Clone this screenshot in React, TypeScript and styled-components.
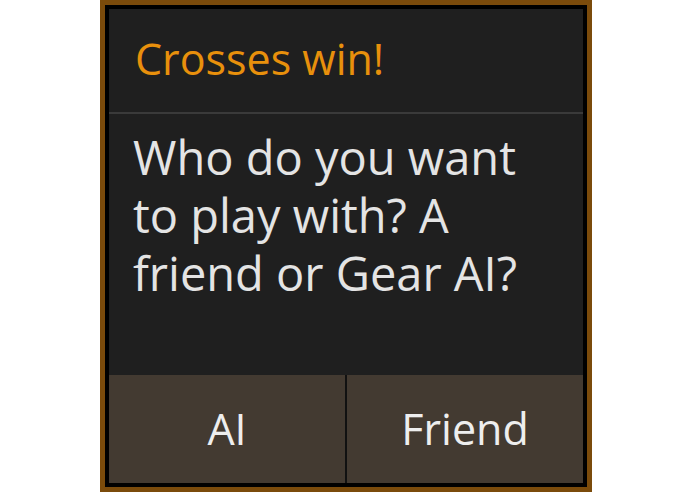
import React from 'react';
import styled, { createGlobalStyle } from 'styled-components';

const GlobalStyle = createGlobalStyle`
  html, body {
    margin: 0;
    padding: 0;
    background: #ffffff;
  }
  body {
    font-family: "Open Sans", "Noto Sans", "DejaVu Sans", sans-serif;
  }
`;

const Page = styled.div`
  width: 695px;
  height: 494px;
  display: flex;
  align-items: flex-start;
  padding-left: 100px;
  box-sizing: border-box;
`;

const Frame = styled.div`
  width: 492px;
  height: 492px;
  box-sizing: border-box;
  border: 5px solid #7b4b0b;
  background: #000000;
  padding: 4px;
`;

const Popup = styled.div`
  width: 474px;
  height: 474px;
  display: flex;
  flex-direction: column;
  background: #1f1f1f;
`;

const Title = styled.div`
  height: 105px;
  box-sizing: border-box;
  padding: 24px 0 0 26px;
  font-size: 43px;
  line-height: 52px;
  color: #e8900c;
  border-bottom: 2px solid #3a3a3a;
`;

const Message = styled.div`
  flex: 1;
  padding: 14px 20px 0 24px;
  font-size: 47px;
  line-height: 58px;
  color: #e4e4e4;
`;

const Actions = styled.div`
  height: 108px;
  display: flex;
  gap: 2px;
  background: #111111;
`;

const ActionButton = styled.button`
  flex: 1;
  border: none;
  margin: 0;
  padding: 0 0 2px;
  background: #433a31;
  color: #eeeeee;
  font-family: inherit;
  font-size: 43px;
  cursor: pointer;
`;

export default function App() {
  return (
    <>
      <GlobalStyle />
      <Page>
        <Frame>
          <Popup>
            <Title>Crosses win!</Title>
            <Message>Who do you want to play with? A friend or Gear AI?</Message>
            <Actions>
              <ActionButton>AI</ActionButton>
              <ActionButton>Friend</ActionButton>
            </Actions>
          </Popup>
        </Frame>
      </Page>
    </>
  );
}
